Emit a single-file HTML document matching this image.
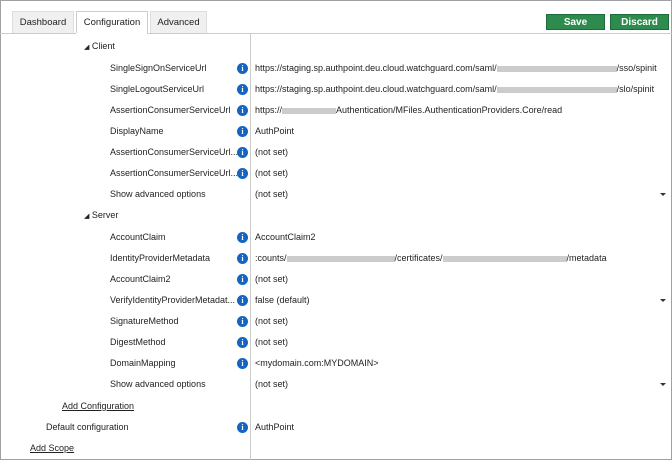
<!DOCTYPE html>
<html><head><style>
body{margin:0;width:672px;height:460px;overflow:hidden;background:#fff;font-family:"Liberation Sans",sans-serif;font-size:9px;color:#222;position:relative}
.frame{position:absolute;left:0;top:0;width:670px;height:458px;border:1px solid #a0a0a0}
.tab{position:absolute;top:11px;height:22px;line-height:22px;background:#f0f0f0;border:1px solid #ddd;border-bottom:none;text-align:center;box-sizing:border-box;font-size:9.5px}
.hl{position:absolute;left:0;top:33px;width:672px;height:1px;background:#ccc}
.vl{position:absolute;left:250px;top:34px;width:1px;height:426px;background:#ccc}
.btn{position:absolute;top:14px;height:16px;width:59px;background:#2e8b4e;border:1px solid #1f6b39;color:#fff;font-weight:bold;text-align:center;line-height:15px;box-sizing:border-box;font-size:10px}
.t{position:absolute;white-space:nowrap;line-height:12px}
.i{position:absolute;left:237px;width:11px;height:11px;border-radius:50%;background:#1565c0;color:#fff;font-size:8px;font-weight:bold;text-align:center;line-height:11px;font-family:"Liberation Serif",serif}
.b{display:inline-block;height:6px;background:#ccc;vertical-align:middle}
.ar{position:absolute;left:660px;width:0;height:0;border-left:3px solid transparent;border-right:3px solid transparent;border-top:3px solid #333}
u{text-decoration:underline}
</style></head><body>
<div class="frame"></div>
<div class="tab" style="left:12px;width:62px">Dashboard</div>
<div class="tab" style="left:76px;width:72px;background:#fff;height:23px;border-color:#ccc">Configuration</div>
<div class="tab" style="left:150px;width:57px">Advanced</div>
<div class="hl"></div><div class="hl" style="left:76px;width:71px;background:#fff"></div>
<div class="vl"></div>
<div class="btn" style="left:546px">Save</div>
<div class="btn" style="left:610px">Discard</div>

<div class="t" style="left:84px;top:40px"><span style="font-size:7px">◢</span> Client</div>
<div class="t" style="left:110px;top:62px">SingleSignOnServiceUrl</div><div class="i" style="top:63px">i</div>
<div class="t" style="left:255px;top:62px">https://staging.sp.authpoint.deu.cloud.watchguard.com/saml/<span class="b" style="width:120px"></span>/sso/spinit</div>
<div class="t" style="left:110px;top:83px">SingleLogoutServiceUrl</div><div class="i" style="top:84px">i</div>
<div class="t" style="left:255px;top:83px">https://staging.sp.authpoint.deu.cloud.watchguard.com/saml/<span class="b" style="width:120px"></span>/slo/spinit</div>
<div class="t" style="left:110px;top:104px">AssertionConsumerServiceUrl</div><div class="i" style="top:105px">i</div>
<div class="t" style="left:255px;top:104px">https://<span class="b" style="width:54px"></span>Authentication/MFiles.AuthenticationProviders.Core/read</div>
<div class="t" style="left:110px;top:125px">DisplayName</div><div class="i" style="top:126px">i</div>
<div class="t" style="left:255px;top:125px">AuthPoint</div>
<div class="t" style="left:110px;top:146px">AssertionConsumerServiceUrl...</div><div class="i" style="top:147px">i</div>
<div class="t" style="left:255px;top:146px">(not set)</div>
<div class="t" style="left:110px;top:167px">AssertionConsumerServiceUrl...</div><div class="i" style="top:168px">i</div>
<div class="t" style="left:255px;top:167px">(not set)</div>
<div class="t" style="left:110px;top:188px">Show advanced options</div>
<div class="t" style="left:255px;top:188px">(not set)</div><div class="ar" style="top:193px"></div>

<div class="t" style="left:84px;top:209px"><span style="font-size:7px">◢</span> Server</div>
<div class="t" style="left:110px;top:231px">AccountClaim</div><div class="i" style="top:232px">i</div>
<div class="t" style="left:255px;top:231px">AccountClaim2</div>
<div class="t" style="left:110px;top:252px">IdentityProviderMetadata</div><div class="i" style="top:253px">i</div>
<div class="t" style="left:255px;top:252px">:counts/<span class="b" style="width:108px"></span>/certificates/<span class="b" style="width:124px"></span>/metadata</div>
<div class="t" style="left:110px;top:273px">AccountClaim2</div><div class="i" style="top:274px">i</div>
<div class="t" style="left:255px;top:273px">(not set)</div>
<div class="t" style="left:110px;top:294px">VerifyIdentityProviderMetadat...</div><div class="i" style="top:295px">i</div>
<div class="t" style="left:255px;top:294px">false (default)</div><div class="ar" style="top:299px"></div>
<div class="t" style="left:110px;top:315px">SignatureMethod</div><div class="i" style="top:316px">i</div>
<div class="t" style="left:255px;top:315px">(not set)</div>
<div class="t" style="left:110px;top:336px">DigestMethod</div><div class="i" style="top:337px">i</div>
<div class="t" style="left:255px;top:336px">(not set)</div>
<div class="t" style="left:110px;top:357px">DomainMapping</div><div class="i" style="top:358px">i</div>
<div class="t" style="left:255px;top:357px">&lt;mydomain.com:MYDOMAIN&gt;</div>
<div class="t" style="left:110px;top:378px">Show advanced options</div>
<div class="t" style="left:255px;top:378px">(not set)</div><div class="ar" style="top:383px"></div>

<div class="t" style="left:62px;top:400px"><u>Add Configuration</u></div>
<div class="t" style="left:46px;top:421px">Default configuration</div><div class="i" style="top:422px">i</div>
<div class="t" style="left:255px;top:421px">AuthPoint</div>
<div class="t" style="left:30px;top:442px"><u>Add Scope</u></div>
</body></html>
